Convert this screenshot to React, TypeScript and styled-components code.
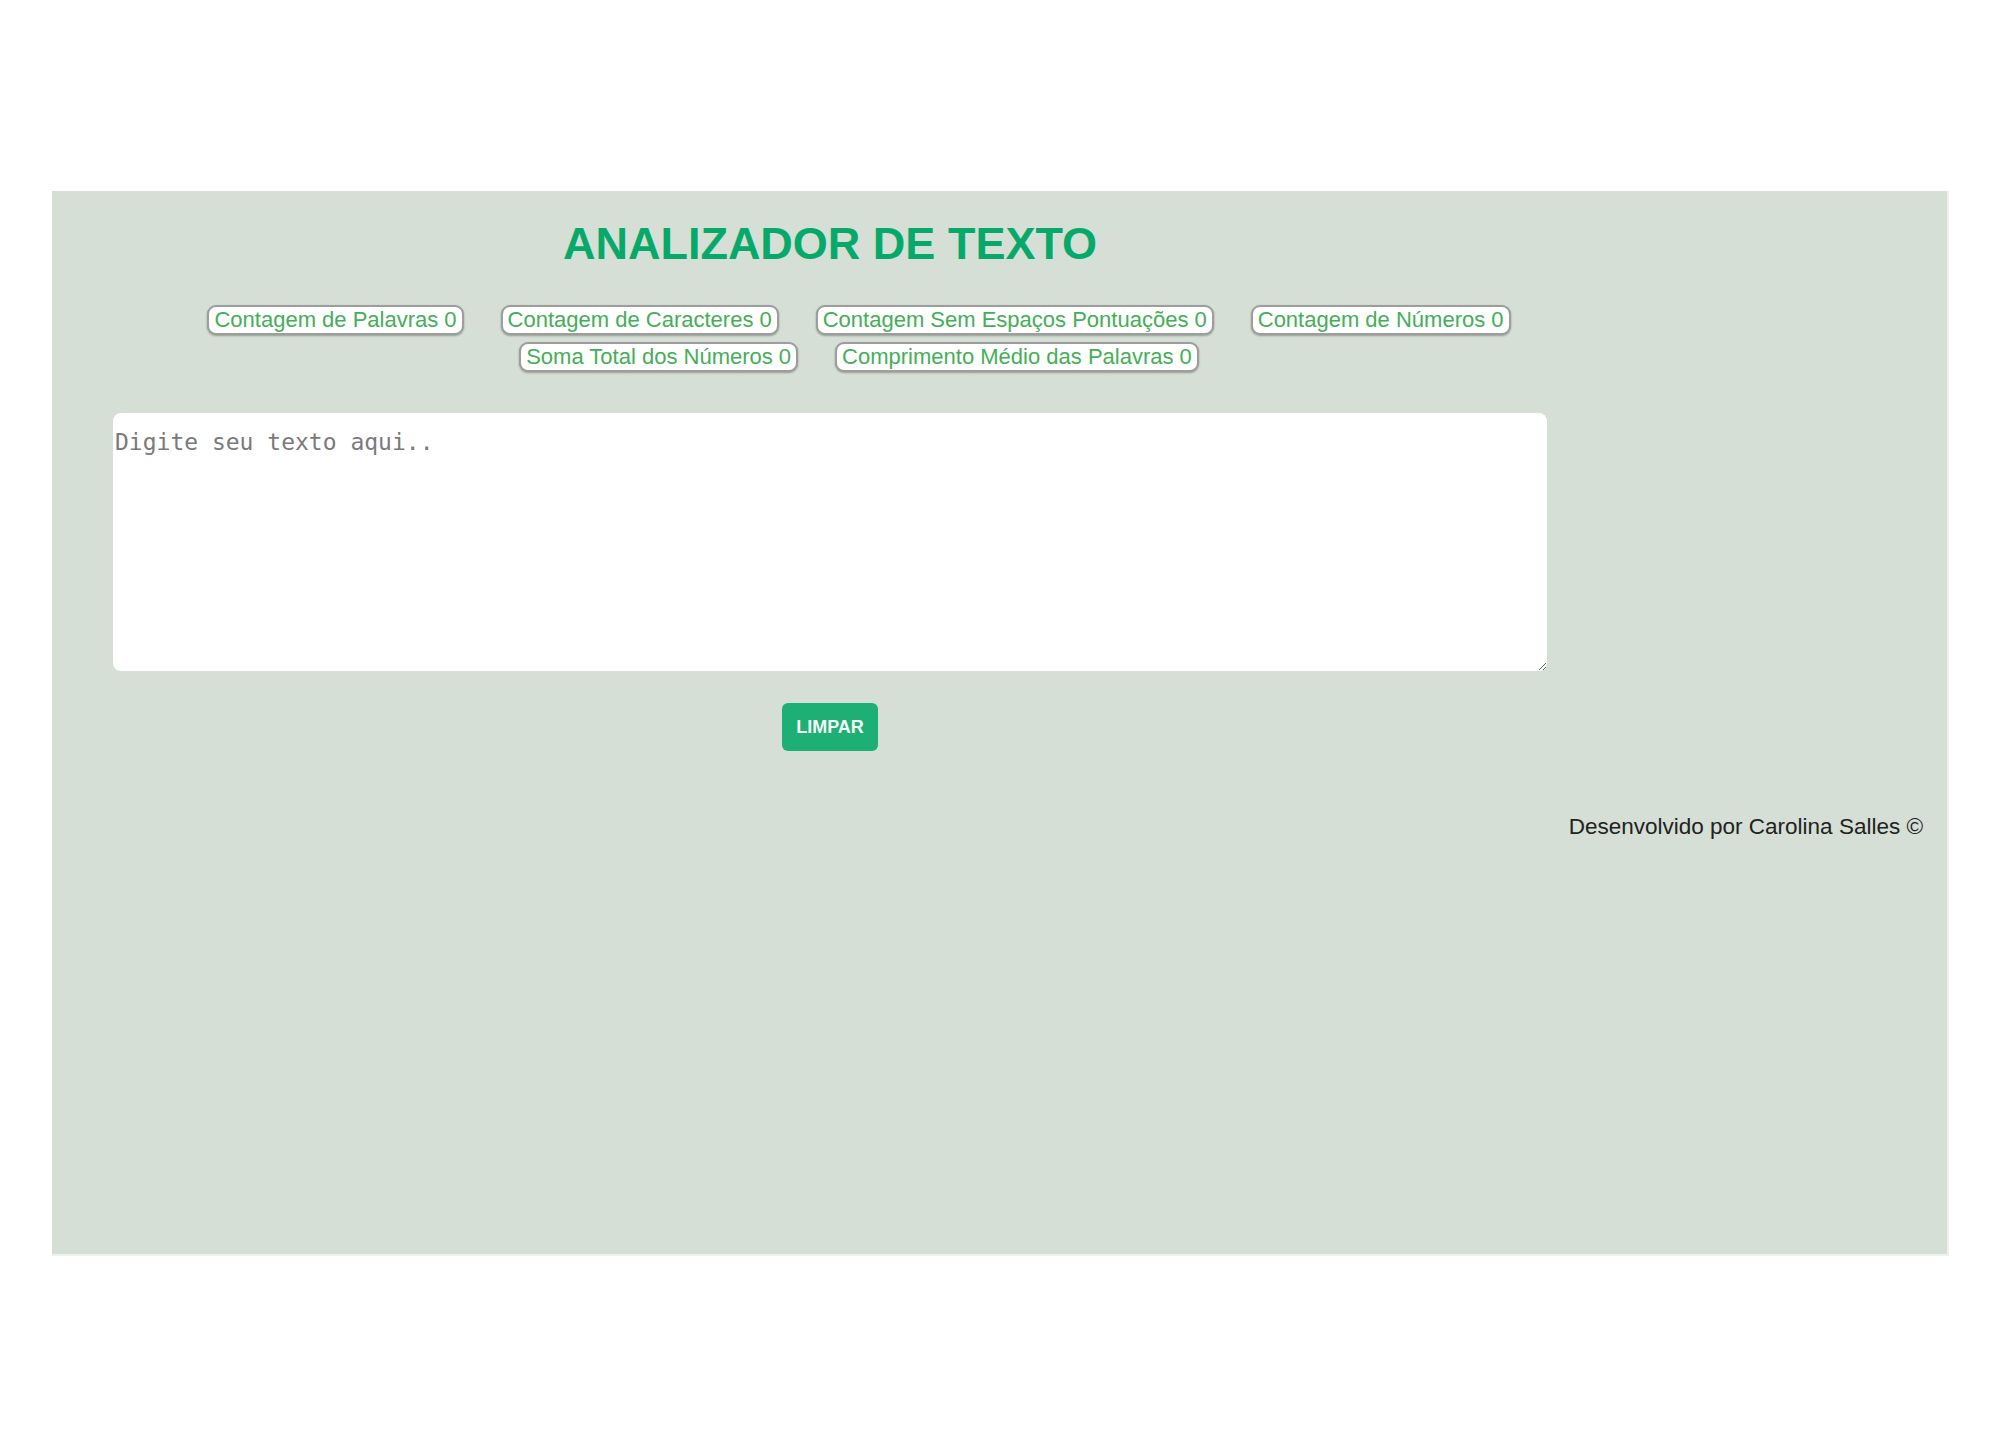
import React from "react";
import styled, { createGlobalStyle } from "styled-components";

const GlobalStyle = createGlobalStyle`
  html, body {
    margin: 0;
    padding: 0;
    background: #ffffff;
    font-family: "Liberation Sans", Arial, sans-serif;
  }
`;

const Page = styled.div`
  padding: 191px 0 0 52px;
`;

const Panel = styled.main`
  box-sizing: border-box;
  width: 1897px;
  height: 1065px;
  background: #d5dfd5;
  border-right: 2px solid #eef1ee;
  border-bottom: 2px solid #eef1ee;
  padding-top: 27px;
`;

const Column = styled.section`
  width: 1434px;
  margin-left: 61px;
`;

const Title = styled.h1`
  margin: 0;
  text-align: center;
  font-family: "Liberation Sans", Arial, sans-serif;
  font-weight: bold;
  font-size: 45px;
  line-height: normal;
  color: #07a96b;
`;

const Stats = styled.div`
  margin-top: 35px;
  padding-left: 58px;
  display: flex;
  flex-wrap: wrap;
  justify-content: center;
  column-gap: 37px;
  row-gap: 7px;
`;

const Stat = styled.button`
  font-family: "Liberation Sans", Arial, sans-serif;
  font-size: 22px;
  line-height: normal;
  color: #45ae58;
  background: #ffffff;
  border: 2px solid #9d9d9d;
  border-radius: 9px;
  box-shadow: 0 1px 2px rgba(0, 0, 0, 0.3);
  padding: 0 5px;
  margin: 0;
  cursor: default;
`;

const TextArea = styled.textarea`
  display: block;
  box-sizing: border-box;
  margin-top: 41px;
  width: 1434px;
  height: 258px;
  border: none;
  border-radius: 8px;
  background: #ffffff;
  padding: 16px 2px 15px;
  font-family: "DejaVu Sans Mono", "Liberation Mono", monospace;
  font-size: 23px;
  line-height: normal;
  color: #333;
  outline: none;
  &::placeholder {
    color: #7a7a7a;
  }
`;

const ClearButton = styled.button`
  display: block;
  box-sizing: border-box;
  margin: 32px auto 0;
  width: 96px;
  height: 48px;
  border: none;
  border-radius: 6px;
  background: #1daf74;
  color: #f4fbf6;
  font-family: "Liberation Sans", Arial, sans-serif;
  font-size: 18px;
  font-weight: bold;
  padding: 0;
  cursor: pointer;
`;

const Footer = styled.footer`
  margin-top: 63px;
  padding-right: 24px;
  text-align: right;
  font-family: "Liberation Sans", Arial, sans-serif;
  font-size: 22.5px;
  line-height: normal;
  color: #222222;
`;

const stats = [
  "Contagem de Palavras 0",
  "Contagem de Caracteres 0",
  "Contagem Sem Espaços Pontuações 0",
  "Contagem de Números 0",
  "Soma Total dos Números 0",
  "Comprimento Médio das Palavras 0",
];

export default function App() {
  return (
    <>
      <GlobalStyle />
      <Page>
        <Panel>
          <Column>
            <Title>ANALIZADOR DE TEXTO</Title>
            <Stats>
              {stats.map((s) => (
                <Stat key={s}>{s}</Stat>
              ))}
            </Stats>
            <TextArea placeholder="Digite seu texto aqui.." />
            <ClearButton>LIMPAR</ClearButton>
          </Column>
          <Footer>Desenvolvido por Carolina Salles ©</Footer>
        </Panel>
      </Page>
    </>
  );
}
